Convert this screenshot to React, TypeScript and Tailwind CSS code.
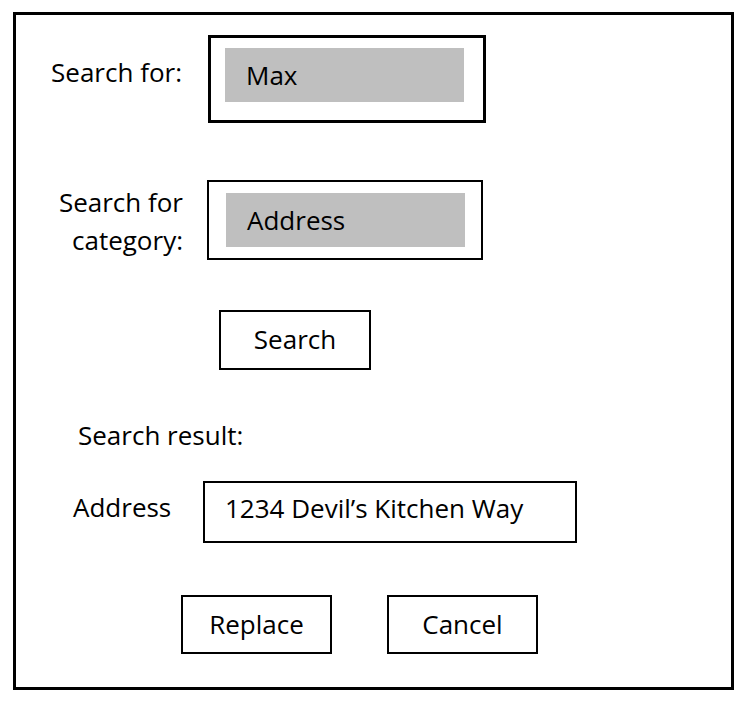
import React from 'react';

const font = "font-['Open_Sans','Noto_Sans',sans-serif]";

const App: React.FC = () => {
  return (
    <div className={`w-[747px] h-[702px] bg-white text-black text-[26px] leading-[35px] ${font}`}>
      <div className="ml-[13px] mt-[12px] w-[721px] h-[678px] border-[3px] border-black flex flex-col">
        {/* Search for */}
        <div className="flex items-start mt-[20px]">
          <div className="w-[192px] pr-[26px] text-right mt-[20px]">Search for:</div>
          <div className="w-[278px] h-[88px] border-[3px] border-black pt-[10px] pl-[14px]">
            <div className="w-[239px] h-[54px] bg-[#bfbfbf] pl-[21px] flex items-center">Max</div>
          </div>
        </div>

        {/* Search for category */}
        <div className="flex items-start mt-[57px]">
          <div className="w-[191px] pr-[24px] text-right leading-[38px] mt-[3px]">
            Search for
            <br />
            category:
          </div>
          <div className="w-[276px] h-[80px] border-2 border-black pt-[11px] pl-[17px]">
            <div className="w-[239px] h-[54px] bg-[#bfbfbf] pl-[21px] flex items-center">Address</div>
          </div>
        </div>

        <div className="flex mt-[50px] ml-[203px]">
          <button className="w-[152px] h-[60px] border-2 border-black flex items-center justify-center pb-[2px]">Search</button>
        </div>

        <div className="mt-[48px] ml-[62px]">Search result:</div>

        {/* Result row */}
        <div className="flex items-start mt-[28px]">
          <div className="w-[187px] pl-[57px] mt-[9px]">Address</div>
          <div className="w-[374px] h-[62px] border-2 border-black pl-[20px] pt-[8px]">1234 Devil’s Kitchen Way</div>
        </div>

        <div className="flex gap-[55px] mt-[52px] ml-[165px]">
          <button className="w-[151px] h-[59px] border-2 border-black flex items-center justify-center">Replace</button>
          <button className="w-[151px] h-[59px] border-2 border-black flex items-center justify-center">Cancel</button>
        </div>
      </div>
    </div>
  );
};

export default App;
